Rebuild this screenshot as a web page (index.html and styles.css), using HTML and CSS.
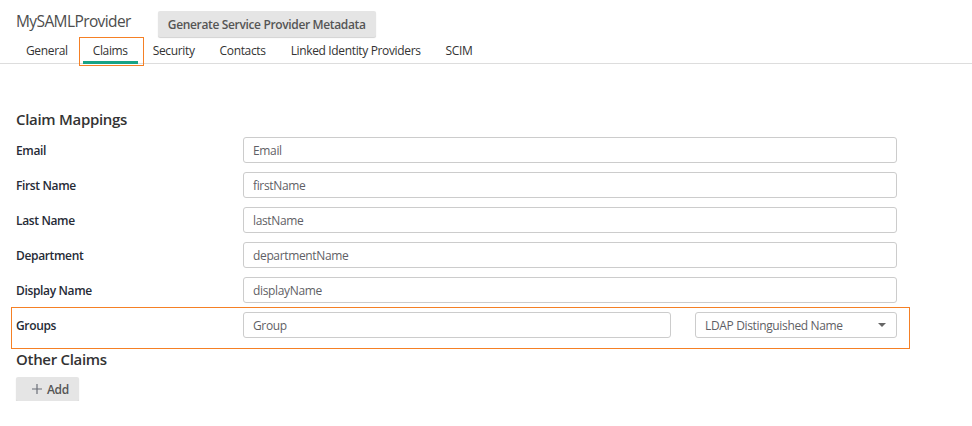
FILE: index.html
```html
<!DOCTYPE html>
<html lang="en">

<head>
  <meta charset="UTF-8">
  <meta name="viewport" content="width=device-width, initial-scale=1.0">
  <title>MySAMLProvider - Claims</title>
  <link rel="stylesheet" href="styles.css">
</head>

<body>
  <header class="page-header">
    <div class="title-row">
      <h1>MySAMLProvider</h1>
      <button class="btn btn-metadata">Generate Service Provider Metadata</button>
    </div>
    <nav class="tabs">
      <a class="tab">General</a>
      <a class="tab active">Claims</a>
      <a class="tab">Security</a>
      <a class="tab">Contacts</a>
      <a class="tab">Linked Identity Providers</a>
      <a class="tab">SCIM</a>
    </nav>
  </header>

  <main class="content">
    <h2>Claim Mappings</h2>

    <div class="form-row">
      <label for="email">Email</label>
      <div class="fields"><input type="text" id="email" value="Email"></div>
    </div>
    <div class="form-row">
      <label for="first-name">First Name</label>
      <div class="fields"><input type="text" id="first-name" value="firstName"></div>
    </div>
    <div class="form-row">
      <label for="last-name">Last Name</label>
      <div class="fields"><input type="text" id="last-name" value="lastName"></div>
    </div>
    <div class="form-row">
      <label for="department">Department</label>
      <div class="fields"><input type="text" id="department" value="departmentName"></div>
    </div>
    <div class="form-row">
      <label for="display-name">Display Name</label>
      <div class="fields"><input type="text" id="display-name" value="displayName"></div>
    </div>
    <div class="form-row highlight">
      <label for="groups">Groups</label>
      <div class="fields">
        <input type="text" id="groups" value="Group">
        <div class="select">
          <span>LDAP Distinguished Name</span>
          <span class="caret"></span>
        </div>
      </div>
    </div>

    <h2 class="other-claims">Other Claims</h2>
    <button class="btn btn-add">
      <svg width="10" height="10" viewBox="0 0 10 10">
        <path d="M5 0v10M0 5h10" stroke="#6b6f78" stroke-width="1.2" fill="none" />
      </svg>
      Add
    </button>
  </main>
</body>

</html>
```

FILE: styles.css
```css
body {
  margin: 0;
  font-family: "Open Sans", "Liberation Sans", sans-serif;
  font-size: 12px;
  letter-spacing: -0.35px;
  color: #333;
  background: #fff;
}

/* header + tabs */
.page-header {
  border-bottom: 1px solid #ddd;
}

.title-row {
  display: flex;
  align-items: center;
  padding: 11px 16px 0;
  height: 26px;
}

.title-row h1 {
  margin: 0 27px 0 0;
  font-size: 15.5px;
  font-weight: normal;
  letter-spacing: -0.6px;
  color: #4d4d4d;
  line-height: 22px;
  position: relative;
  top: -3px;
}

.btn {
  font-family: inherit;
  font-size: 12px;
  font-weight: 600;
  letter-spacing: inherit;
  color: #555;
  background-color: #e5e5e5;
  border: none;
  border-radius: 2px;
  box-shadow: 0 1px 1px rgba(0, 0, 0, 0.18);
  cursor: pointer;
}

.btn-metadata {
  height: 26px;
  padding: 0 10px;
}

.tabs {
  display: flex;
  padding: 0 16px;
}

.tab {
  position: relative;
  padding: 6px 10px 2px;
  margin-right: 5px;
  margin-bottom: -1px;
  line-height: 16px;
  border-bottom: 3px solid transparent;
  color: #333;
  cursor: pointer;
}

.tab.active {
  border-bottom-color: #17a386;
}

.tab.active::after {
  content: "";
  position: absolute;
  left: -4px;
  right: -6px;
  top: 0;
  bottom: -5px;
  border: 1px solid #f58025;
}

/* form */
.content {
  padding: 45px 75px 0 16px;
}

.content h2 {
  margin: 0 0 8px;
  font-size: 15px;
  font-weight: 600;
  line-height: 20px;
  letter-spacing: -0.3px;
  color: #333;
}

.content h2.other-claims {
  margin-top: 11px;
}

.form-row {
  position: relative;
  display: grid;
  grid-template-columns: 227px 1fr;
  align-items: center;
  margin-bottom: 9px;
}

.form-row label {
  font-weight: 600;
  color: #262b36;
}

.fields {
  display: flex;
  gap: 24px;
}

.fields input {
  flex: 1;
  min-width: 0;
  height: 26px;
  box-sizing: border-box;
  padding: 0 9px;
  border: 1px solid #ccc;
  border-radius: 3px;
  font-family: inherit;
  font-size: 12px;
  letter-spacing: inherit;
  color: #5f5f66;
}

.select {
  width: 202px;
  height: 26px;
  box-sizing: border-box;
  padding: 0 10px 0 9px;
  border: 1px solid #ccc;
  border-radius: 3px;
  display: flex;
  align-items: center;
  justify-content: space-between;
  color: #5f5f66;
}

.caret {
  width: 0;
  height: 0;
  border-left: 4px solid transparent;
  border-right: 4px solid transparent;
  border-top: 4px solid #666;
}

.form-row.highlight {
  margin-bottom: 0;
}

.form-row.highlight::after {
  content: "";
  position: absolute;
  left: -5px;
  right: -13px;
  top: -5px;
  bottom: -11px;
  border: 1px solid #f58025;
  pointer-events: none;
}

.btn-add {
  display: flex;
  align-items: center;
  gap: 5px;
  height: 24px;
  padding: 0 10px 0 16px;
}
```
